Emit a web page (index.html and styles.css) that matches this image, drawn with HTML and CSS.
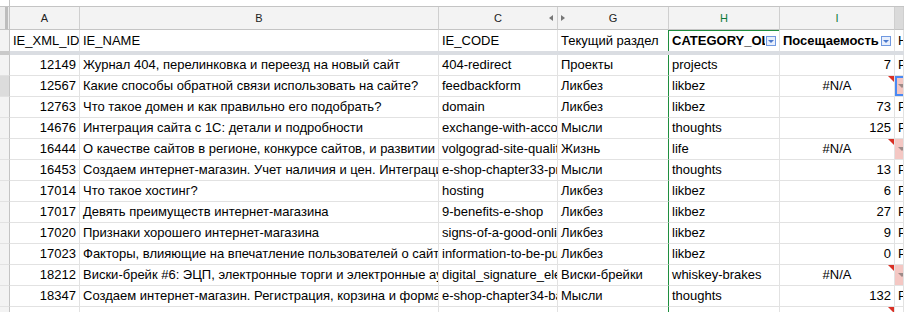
FILE: index.html
```html
<!DOCTYPE html>
<html lang="ru">
<head>
<meta charset="utf-8">
<title>Sheet</title>
<link rel="stylesheet" href="styles.css">
</head>
<body>
<div class="sheet">
  <div class="strip"><div class="strip-gut"></div></div>
  <div class="row colhdr">
    <div class="c gut"></div>
    <div class="c">A</div>
    <div class="c">B</div>
    <div class="c has-arrows">C<span class="arr arr-l"></span><span class="arr arr-r"></span></div>
    <div class="c">G</div>
    <div class="c green">H</div>
    <div class="c green">I</div>
    <div class="c sel-col"></div>
  </div>
  <div class="row hdr">
    <div class="c gut"></div>
    <div class="c t">IE_XML_ID</div>
    <div class="c t">IE_NAME</div>
    <div class="c t">IE_CODE</div>
    <div class="c t gl">Текущий раздел</div>
    <div class="c t b gtop"><span class="clip">CATEGORY_OLD</span><span class="flt"></span></div>
    <div class="c t b"><span class="clip">Посещаемость</span><span class="flt"></span></div>
    <div class="c t">Название</div>
  </div>
  <div class="divider"></div>

  <div class="row">
    <div class="c gut"></div><div class="c n">12149</div><div class="c t">Журнал 404, перелинковка и переезд на новый сайт</div><div class="c t">404-redirect</div><div class="c t gl">Проекты</div><div class="c t">projects</div><div class="c n">7</div><div class="c t">Р</div>
  </div>
  <div class="row">
    <div class="c gut sel-row"></div><div class="c n">12567</div><div class="c t">Какие способы обратной связи использовать на сайте?</div><div class="c t">feedbackform</div><div class="c t gl">Ликбез</div><div class="c t">likbez</div><div class="c na mark">#N/A</div><div class="c pink sel"><span class="dd"></span></div>
  </div>
  <div class="row">
    <div class="c gut"></div><div class="c n">12763</div><div class="c t">Что такое домен и как правильно его подобрать?</div><div class="c t">domain</div><div class="c t gl">Ликбез</div><div class="c t">likbez</div><div class="c n">73</div><div class="c t">Р</div>
  </div>
  <div class="row">
    <div class="c gut"></div><div class="c n">14676</div><div class="c t">Интеграция сайта с 1С: детали и подробности</div><div class="c t">exchange-with-accounting</div><div class="c t gl">Мысли</div><div class="c t">thoughts</div><div class="c n">125</div><div class="c t">Р</div>
  </div>
  <div class="row">
    <div class="c gut"></div><div class="c n">16444</div><div class="c t">О качестве сайтов в регионе, конкурсе сайтов, и развитии интернета</div><div class="c t">volgograd-site-quality</div><div class="c t gl">Жизнь</div><div class="c t">life</div><div class="c na mark">#N/A</div><div class="c pink"><span class="dd"></span></div>
  </div>
  <div class="row">
    <div class="c gut"></div><div class="c n">16453</div><div class="c t">Создаем интернет-магазин. Учет наличия и цен. Интеграция с 1С</div><div class="c t">e-shop-chapter33-prices</div><div class="c t gl">Мысли</div><div class="c t">thoughts</div><div class="c n">13</div><div class="c t">Р</div>
  </div>
  <div class="row">
    <div class="c gut"></div><div class="c n">17014</div><div class="c t">Что такое хостинг?</div><div class="c t">hosting</div><div class="c t gl">Ликбез</div><div class="c t">likbez</div><div class="c n">6</div><div class="c t">Р</div>
  </div>
  <div class="row">
    <div class="c gut"></div><div class="c n">17017</div><div class="c t">Девять преимуществ интернет-магазина</div><div class="c t">9-benefits-e-shop</div><div class="c t gl">Ликбез</div><div class="c t">likbez</div><div class="c n">27</div><div class="c t">Р</div>
  </div>
  <div class="row">
    <div class="c gut"></div><div class="c n">17020</div><div class="c t">Признаки хорошего интернет-магазина</div><div class="c t">signs-of-a-good-online-shop</div><div class="c t gl">Ликбез</div><div class="c t">likbez</div><div class="c n">9</div><div class="c t">Р</div>
  </div>
  <div class="row">
    <div class="c gut"></div><div class="c n">17023</div><div class="c t">Факторы, влияющие на впечатление пользователей о сайте</div><div class="c t">information-to-be-published</div><div class="c t gl">Ликбез</div><div class="c t">likbez</div><div class="c n">0</div><div class="c t">Р</div>
  </div>
  <div class="row">
    <div class="c gut"></div><div class="c n">18212</div><div class="c t">Виски-брейк #6: ЭЦП, электронные торги и электронные аукционы</div><div class="c t">digital_signature_electronic_auctions</div><div class="c t gl">Виски-брейки</div><div class="c t">whiskey-brakes</div><div class="c na mark">#N/A</div><div class="c pink"><span class="dd"></span></div>
  </div>
  <div class="row">
    <div class="c gut"></div><div class="c n">18347</div><div class="c t">Создаем интернет-магазин. Регистрация, корзина и форма заказа</div><div class="c t">e-shop-chapter34-basket</div><div class="c t gl">Мысли</div><div class="c t">thoughts</div><div class="c n">132</div><div class="c t">Р</div>
  </div>
  <div class="row">
    <div class="c gut"></div><div class="c n"></div><div class="c t"></div><div class="c t"></div><div class="c t gl"></div><div class="c t"></div><div class="c n mark"></div><div class="c t"></div>
  </div>
</div>
</body>
</html>
```

FILE: styles.css
```css
html, body {
  margin: 0;
  padding: 0;
  background: #ffffff;
  overflow: hidden;
}

.sheet {
  width: 904px;
  font-family: "Liberation Sans", Arial, sans-serif;
  font-size: 13px;
  color: #000000;
}

.strip {
  height: 6px;
  border-bottom: 1px solid #c4c4c4;
  display: flex;
}

.strip-gut {
  width: 9px;
  border-right: 1px solid #c4c4c4;
}

.row {
  display: grid;
  grid-template-columns: 10px 70px 359px 119px 111px 111px 115px 1fr;
  height: 21px;
}

.c {
  box-sizing: border-box;
  border-right: 1px solid #e2e2e2;
  border-bottom: 1px solid #e2e2e2;
  white-space: nowrap;
  overflow: hidden;
  line-height: 20px;
  position: relative;
}

.t {
  padding-left: 3px;
}

.n {
  text-align: right;
  padding-right: 3px;
}

.na {
  text-align: center;
}

.b {
  font-weight: bold;
}

.gut {
  background: #f3f3f3;
  border-right: 1px solid #c4c4c4;
}

.sel-row {
  background: #dcdcdc;
}

/* column letters header */
.colhdr {
  height: 23px;
}

.colhdr .c {
  background: #f3f3f3;
  border-right: 1px solid #cfcfcf;
  border-bottom: 1px solid #c4c4c4;
  text-align: center;
  font-size: 11px;
  line-height: 22px;
  color: #222222;
  overflow: visible;
}

.colhdr .gut {
  background: linear-gradient(to right, #ececec 0 5px, #bdbdbd 5px 8px, #ececec 8px 10px);
  border-right: 1px solid #c4c4c4;
}

.colhdr .green {
  color: #0b7a3a;
}

.colhdr .sel-col {
  background: #dadada;
}

.arr {
  position: absolute;
  top: 8px;
  width: 0;
  height: 0;
  border-top: 3px solid transparent;
  border-bottom: 3px solid transparent;
  z-index: 2;
}

.arr-l {
  right: 4px;
  border-right: 4px solid #777777;
}

.arr-r {
  right: -8px;
  border-left: 4px solid #777777;
}

/* header row */
.hdr {
  height: 21px;
}

.hdr .c {
  display: flex;
  align-items: center;
  border-bottom: none;
}

.clip {
  flex: 1;
  overflow: hidden;
  min-width: 0;
}

.flt {
  flex: none;
  width: 8px;
  height: 8px;
  margin: 0 3px 0 1px;
  border: 1px solid #6f98e0;
  background: #e8effc;
  position: relative;
}

.flt::after {
  content: "";
  position: absolute;
  left: 1px;
  top: 3px;
  border-left: 3px solid transparent;
  border-right: 3px solid transparent;
  border-top: 3px solid #4a78cc;
}

.gl {
  border-right: 1px solid #1e8e3e;
}

.gtop {
  box-shadow: inset 0 1px 0 #1e8e3e;
}

.divider {
  height: 4px;
  background: linear-gradient(to right, #c9c9c9 0 10px, #dadde2 10px);
}

/* markers */
.mark::after {
  content: "";
  position: absolute;
  top: 0;
  right: 0;
  border-top: 6px solid #d93025;
  border-left: 6px solid transparent;
}

.pink {
  background: #f4c7c3;
}

.dd {
  position: absolute;
  left: 3px;
  top: 8px;
  border-left: 4px solid transparent;
  border-right: 4px solid transparent;
  border-top: 4px solid #9e8a88;
}

.sel {
  box-shadow: inset 2px 2px 0 #4a89f3, inset 0 -2px 0 #4a89f3;
}
```
